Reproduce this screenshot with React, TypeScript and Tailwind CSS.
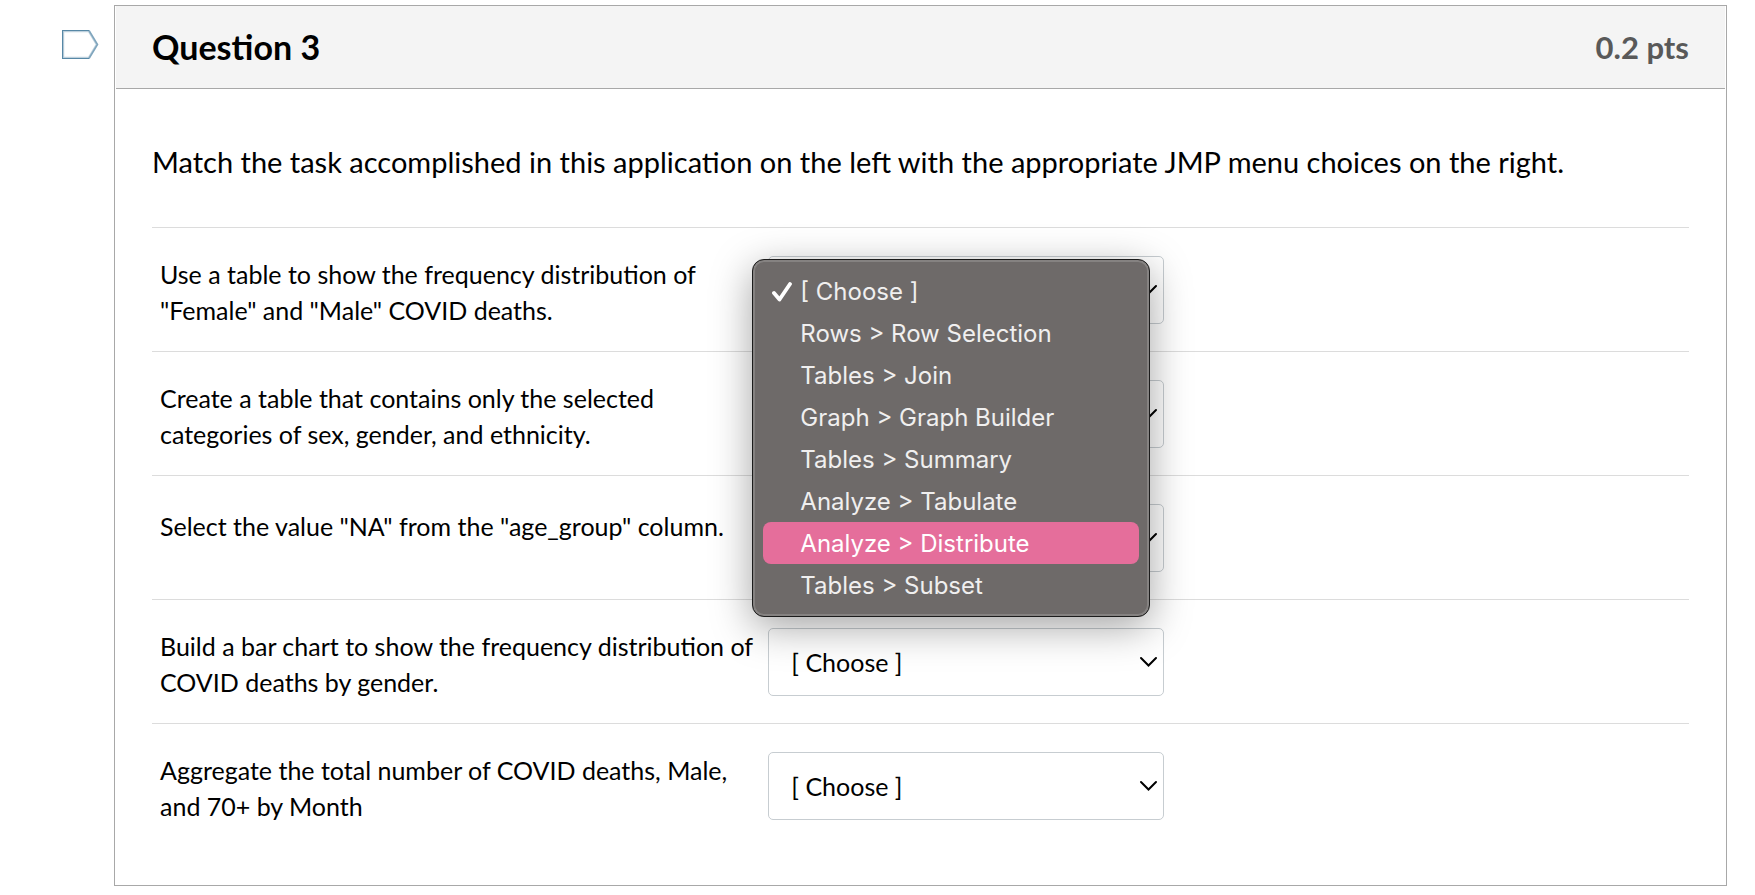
import { useState } from 'react'

const choices = [
  '[ Choose ]',
  'Rows > Row Selection',
  'Tables > Join',
  'Graph > Graph Builder',
  'Tables > Summary',
  'Analyze > Tabulate',
  'Analyze > Distribute',
  'Tables > Subset',
]

const tasks = [
  { id: 'task-1', text: 'Use a table to show the frequency distribution of "Female" and "Male" COVID deaths.' },
  { id: 'task-2', text: 'Create a table that contains only the selected categories of sex, gender, and ethnicity.' },
  { id: 'task-3', text: 'Select the value "NA" from the "age_group" column.' },
  { id: 'task-4', text: 'Build a bar chart to show the frequency distribution of COVID deaths by gender.' },
  { id: 'task-5', text: 'Aggregate the total number of COVID deaths, Male, and 70+ by Month' },
]

function FlagIcon() {
  return (
    <svg width="38" height="30" viewBox="0 0 38 30" fill="none" aria-hidden="true">
      <path d="M1.5 1.5H26.5L34.3 14.5L26.5 27.5H1.5Z" stroke="#bfd1dd" strokeWidth="1.4" />
      <path d="M27 0.5L35.5 14.5L27 28.5" stroke="#7fa5bd" strokeWidth="1.6" />
      <path d="M27 0.5H0.5V28.5H27" stroke="#5788a6" strokeWidth="1.2" />
    </svg>
  )
}

function ChoiceMenu({ selected, onSelect }: { selected: string; onSelect: (choice: string) => void }) {
  const [active, setActive] = useState('Analyze > Distribute')

  return (
    <div
      role="listbox"
      aria-label="Menu choices"
      className="absolute top-[3px] -left-4 z-10 w-[398px] rounded-xl border border-[#1c1c1c] bg-[#6e6a69] px-[10px] py-[10px] font-['Inter',sans-serif] text-[24px] shadow-[inset_0_0_0_2px_#858281,0_10px_40px_rgba(0,0,0,0.36)]"
    >
      {choices.map((choice) => (
        <button
          key={choice}
          type="button"
          role="option"
          aria-selected={choice === selected}
          onMouseEnter={() => setActive(choice)}
          onClick={() => onSelect(choice)}
          className={
            choice === active
              ? 'flex h-[42px] w-full items-center rounded-lg bg-[#e56e9b] pt-0.5 text-left text-white'
              : 'flex h-[42px] w-full items-center rounded-lg pt-0.5 text-left text-[#f0efef]'
          }
        >
          <span className="flex w-[37px] justify-center">
            {choice === selected && (
              <svg width="20" height="20" viewBox="0 0 20 20" fill="none" aria-hidden="true">
                <path d="M2 11L7.5 17.5L18 2" stroke="white" strokeWidth="3.8" strokeLinecap="round" strokeLinejoin="round" />
              </svg>
            )}
          </span>
          {choice}
        </button>
      ))}
    </div>
  )
}

export default function App() {
  const [answers, setAnswers] = useState<Record<string, string>>({})
  const [openTask, setOpenTask] = useState('task-1')

  const answer = (id: string, choice: string) => {
    setAnswers({ ...answers, [id]: choice })
    setOpenTask('')
  }

  return (
    <main className="flex items-start bg-white pt-[5px] pr-7 pb-2 font-['Lato',sans-serif] text-black">
      <div className="flex w-[114px] shrink-0 justify-end pt-[25px] pr-[14px]">
        <button type="button" aria-label="Flag question">
          <FlagIcon />
        </button>
      </div>

      <section className="min-w-0 flex-1 border border-[#a8a8a8] px-px">
        <header className="flex h-[83px] items-center justify-between border-b border-[#a8a8a8] bg-[#f4f4f4] px-9">
          <h1 className="pb-0.5 text-[34px] font-bold">Question 3</h1>
          <span className="text-[31px] font-bold text-[#595959]">0.2 pts</span>
        </header>

        <div className="px-9 pt-[53px] pb-[38px]">
          <p className="pb-[45px] text-[29px] leading-[40px]">
            Match the task accomplished in this application on the left with the appropriate JMP menu choices on the right.
          </p>

          {tasks.map((task) => (
            <div key={task.id} className="flex min-h-[124px] items-start border-t border-[#dcdcdc] pt-7 pb-[23px]">
              <label htmlFor={task.id} className="flex min-h-11 w-[40.1%] items-center pl-2 text-[25px] leading-9">
                {task.text}
              </label>
              <div className="relative w-[396px] shrink-0">
                <select
                  id={task.id}
                  value={answers[task.id] ?? choices[0]}
                  onChange={(e) => answer(task.id, e.target.value)}
                  className="h-[68px] w-full appearance-none rounded-[5px] border border-[#c7cdd1] bg-white pt-0.5 pl-[22px] text-[25px]"
                >
                  {choices.map((choice) => (
                    <option key={choice}>{choice}</option>
                  ))}
                </select>
                <svg
                  className="pointer-events-none absolute top-7 right-[6px]"
                  width="19"
                  height="12"
                  viewBox="0 0 19 12"
                  fill="none"
                  aria-hidden="true"
                >
                  <path d="M2 2L9.5 9.5L17 2" stroke="black" strokeWidth="2" strokeLinecap="round" />
                </svg>
                {openTask === task.id && (
                  <ChoiceMenu
                    selected={answers[task.id] ?? choices[0]}
                    onSelect={(choice) => answer(task.id, choice)}
                  />
                )}
              </div>
            </div>
          ))}
        </div>
      </section>
    </main>
  )
}
